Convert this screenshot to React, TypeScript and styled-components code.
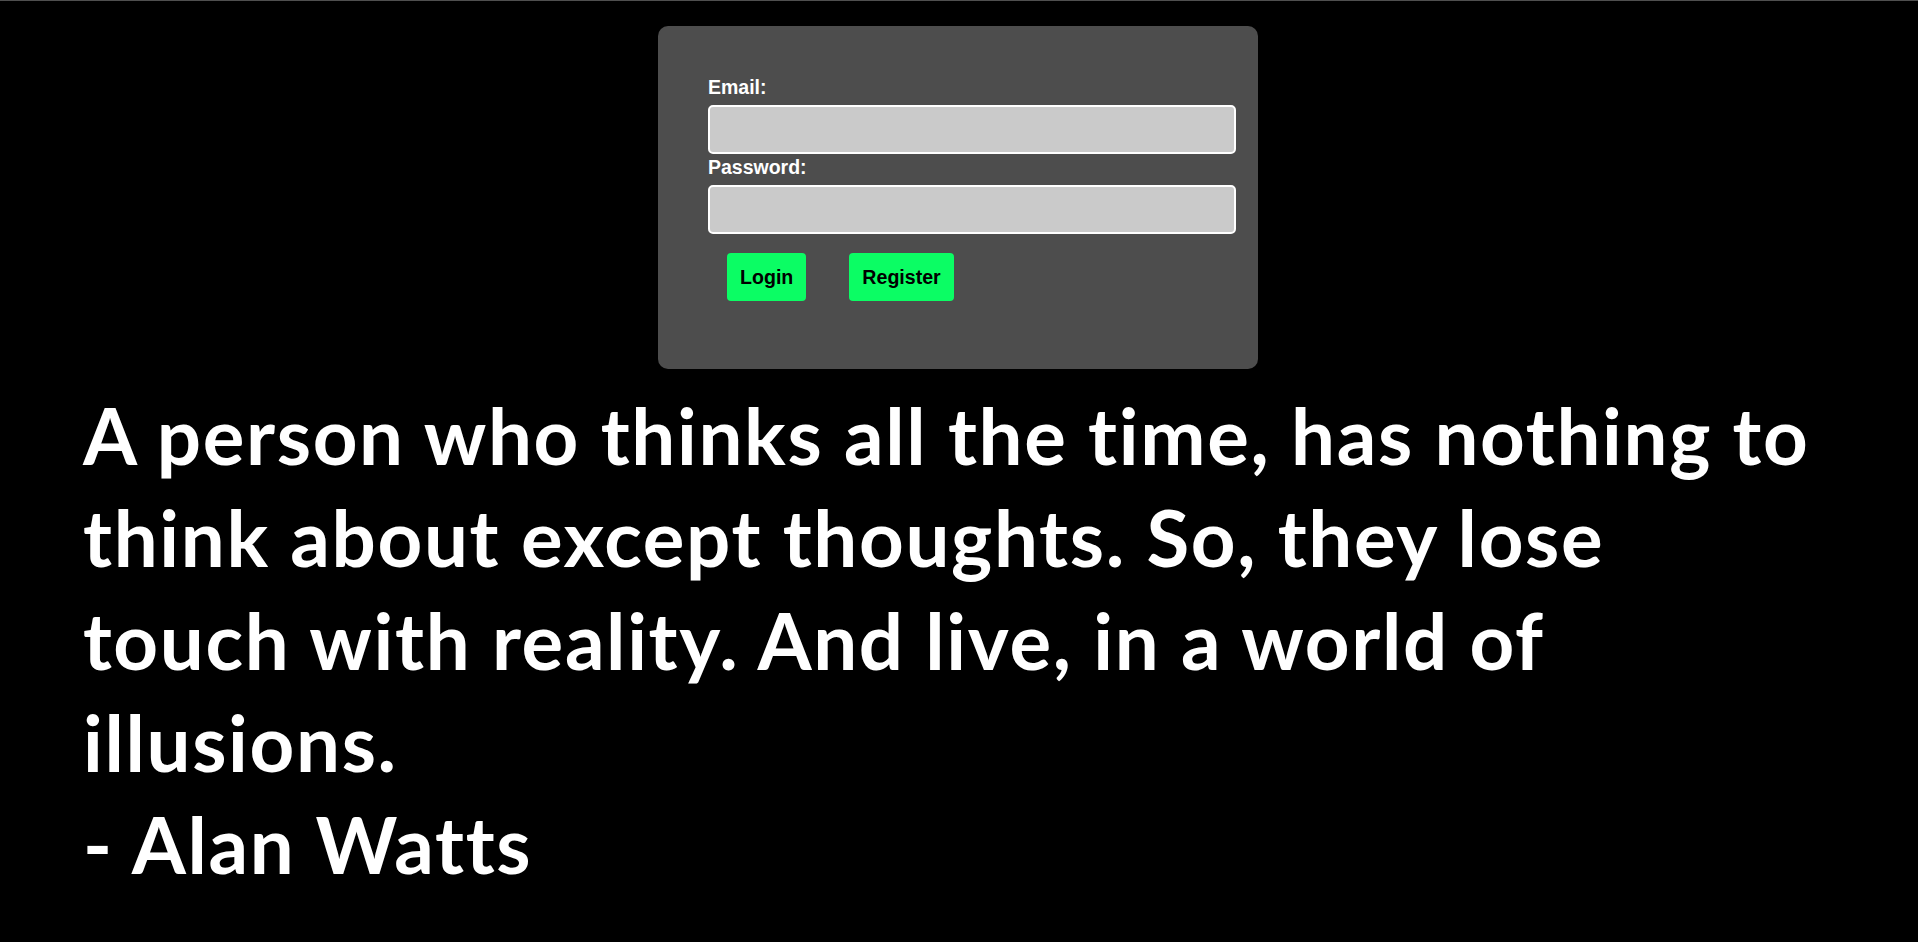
import React from "react";
import styled, { createGlobalStyle } from "styled-components";

const GlobalStyle = createGlobalStyle`
  html, body {
    margin: 0;
    padding: 0;
    background: #000;
  }
  * { box-sizing: border-box; }
`;

const Page = styled.div`
  min-height: 100vh;
  background: #000;
  border-top: 1px solid #4f4f4f;
  display: flex;
  flex-direction: column;
  align-items: stretch;
`;

const Card = styled.form`
  align-self: center;
  width: 600px;
  margin: 25px 2px 0 0;
  padding: 50px 50px 68px;
  background: #4d4d4d;
  border-radius: 10px;
  display: flex;
  flex-direction: column;
  align-items: flex-start;
  font-family: "Liberation Sans", Arial, sans-serif;
`;

const Label = styled.label`
  display: block;
  color: #fff;
  font-weight: 700;
  font-size: 19.5px;
  line-height: 22px;
  margin-bottom: 7px;
`;

const Input = styled.input`
  display: block;
  width: 528px;
  height: 49px;
  margin: 0 0 2px;
  padding: 0 12px;
  background: #cacaca;
  border: 2px solid #fff;
  border-radius: 5px;
  outline: none;
  font-size: 16px;
`;

const ButtonRow = styled.div`
  display: flex;
  gap: 43px;
  margin-top: 17px;
  padding-left: 19px;
`;

const Button = styled.button`
  height: 48px;
  padding: 0 13px;
  background: #0bfd64;
  color: #000;
  border: none;
  border-radius: 4px;
  font-family: "Liberation Sans", Arial, sans-serif;
  font-weight: 700;
  font-size: 19.6px;
  cursor: pointer;
`;

const Quote = styled.p`
  margin: 15px 0 0;
  padding: 0 98px 0 83px;
  color: #fff;
  font-family: Lato, "Open Sans", sans-serif;
  font-weight: 700;
  font-size: 78px;
  line-height: 102.3px;
  letter-spacing: 1.65px;
  font-variant-ligatures: none;
`;

export default function App() {
  return (
    <>
      <GlobalStyle />
      <Page>
        <Card onSubmit={(e) => e.preventDefault()}>
          <Label htmlFor="email">Email:</Label>
          <Input id="email" type="email" />
          <Label htmlFor="password">Password:</Label>
          <Input id="password" type="password" />
          <ButtonRow>
            <Button type="submit">Login</Button>
            <Button type="button">Register</Button>
          </ButtonRow>
        </Card>
        <Quote>
          A person who thinks all the time, has nothing to think about except
          thoughts. So, they lose touch with reality. And live, in a world of
          illusions.
          <br />- Alan Watts
        </Quote>
      </Page>
    </>
  );
}
